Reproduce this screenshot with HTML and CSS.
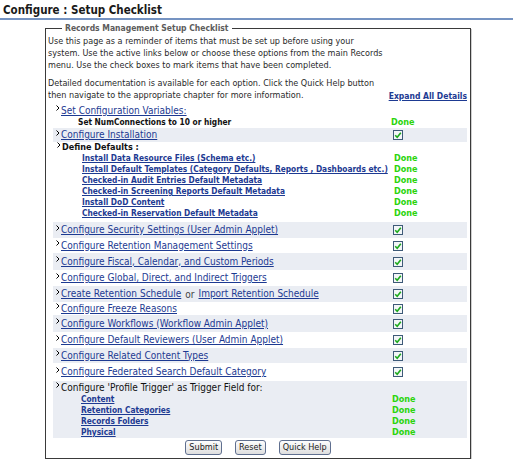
FILE: index.html
```html
<!DOCTYPE html>
<html>
<head>
<meta charset="utf-8">
<title>Configure : Setup Checklist</title>
<link rel="stylesheet" href="styles.css">
</head>
<body>
<h1 class="title">Configure : Setup Checklist</h1>
<div class="rule"></div>
<fieldset class="box">
  <legend class="legend">Records Management Setup Checklist</legend>
  <p class="intro">Use this page as a reminder of items that must be set up before using your<br>system. Use the active links below or choose these options from the main Records<br>menu. Use the check boxes to mark items that have been completed.</p>
  <div class="info">
    <p class="intro">Detailed documentation is available for each option. Click the Quick Help button<br>then navigate to the appropriate chapter for more information.</p>
    <a class="expand" href="#">Expand All Details</a>
  </div>

  <div class="list">
    <div class="row h13">
      <div class="label"><svg class="arrow" width="4" height="6" viewBox="0 0 4 6"><path d="M0.5 0.5 L3 3 L0.5 5.5" fill="none" stroke="#000" stroke-width="1"/></svg><a class="main" href="#">Set Configuration Variables:</a></div>
      <div class="status"></div>
    </div>
    <div class="row h11">
      <div class="label sub1"><b class="strong">Set NumConnections to 10 or higher</b></div>
      <div class="status"><span class="done">Done</span></div>
    </div>
    <div class="row h14 dot">
      <div class="label"><svg class="arrow" width="4" height="6" viewBox="0 0 4 6"><path d="M0.5 0.5 L3 3 L0.5 5.5" fill="none" stroke="#000" stroke-width="1"/></svg><a class="main" href="#">Configure Installation</a></div>
      <div class="status"><span class="cb"><svg width="8" height="8" viewBox="0 0 8 8"><path d="M1.2 4.2 L3.2 6.2 L6.8 1.8" fill="none" stroke="#1daa1d" stroke-width="1.6"/></svg></span></div>
    </div>
    <div class="row h11">
      <div class="label dd"><svg class="arrow" width="4" height="6" viewBox="0 0 4 6"><path d="M0.5 0.5 L3 3 L0.5 5.5" fill="none" stroke="#000" stroke-width="1"/></svg><b class="strong dft">Define Defaults :</b></div>
      <div class="status"></div>
    </div>
    <div class="row h11">
      <div class="label sub2"><a class="subl" href="#">Install Data Resource Files (Schema etc.)</a></div>
      <div class="status"><span class="done d2">Done</span></div>
    </div>
    <div class="row h11">
      <div class="label sub2"><a class="subl" href="#">Install Default Templates (Category Defaults, Reports , Dashboards etc.)</a></div>
      <div class="status"><span class="done d2">Done</span></div>
    </div>
    <div class="row h11">
      <div class="label sub2"><a class="subl" href="#">Checked-in Audit Entries Default Metadata</a></div>
      <div class="status"><span class="done d2">Done</span></div>
    </div>
    <div class="row h11">
      <div class="label sub2"><a class="subl" href="#">Checked-in Screening Reports Default Metadata</a></div>
      <div class="status"><span class="done d2">Done</span></div>
    </div>
    <div class="row h11">
      <div class="label sub2"><a class="subl" href="#">Install DoD Content</a></div>
      <div class="status"><span class="done d2">Done</span></div>
    </div>
    <div class="row h11">
      <div class="label sub2"><a class="subl" href="#">Checked-in Reservation Default Metadata</a></div>
      <div class="status"><span class="done d2">Done</span></div>
    </div>

    <div class="row h16 dot gap">
      <div class="label"><svg class="arrow" width="4" height="6" viewBox="0 0 4 6"><path d="M0.5 0.5 L3 3 L0.5 5.5" fill="none" stroke="#000" stroke-width="1"/></svg><a class="main" href="#">Configure Security Settings (User Admin Applet)</a></div>
      <div class="status"><span class="cb"><svg width="8" height="8" viewBox="0 0 8 8"><path d="M1.2 4.2 L3.2 6.2 L6.8 1.8" fill="none" stroke="#1daa1d" stroke-width="1.6"/></svg></span></div>
    </div>
    <div class="row h15">
      <div class="label"><svg class="arrow" width="4" height="6" viewBox="0 0 4 6"><path d="M0.5 0.5 L3 3 L0.5 5.5" fill="none" stroke="#000" stroke-width="1"/></svg><a class="main" href="#">Configure Retention Management Settings</a></div>
      <div class="status"><span class="cb"><svg width="8" height="8" viewBox="0 0 8 8"><path d="M1.2 4.2 L3.2 6.2 L6.8 1.8" fill="none" stroke="#1daa1d" stroke-width="1.6"/></svg></span></div>
    </div>
    <div class="row h17 dot">
      <div class="label"><svg class="arrow" width="4" height="6" viewBox="0 0 4 6"><path d="M0.5 0.5 L3 3 L0.5 5.5" fill="none" stroke="#000" stroke-width="1"/></svg><a class="main" href="#">Configure Fiscal, Calendar, and Custom Periods</a></div>
      <div class="status"><span class="cb"><svg width="8" height="8" viewBox="0 0 8 8"><path d="M1.2 4.2 L3.2 6.2 L6.8 1.8" fill="none" stroke="#1daa1d" stroke-width="1.6"/></svg></span></div>
    </div>
    <div class="row h16">
      <div class="label"><svg class="arrow" width="4" height="6" viewBox="0 0 4 6"><path d="M0.5 0.5 L3 3 L0.5 5.5" fill="none" stroke="#000" stroke-width="1"/></svg><a class="main" href="#">Configure Global, Direct, and Indirect Triggers</a></div>
      <div class="status"><span class="cb"><svg width="8" height="8" viewBox="0 0 8 8"><path d="M1.2 4.2 L3.2 6.2 L6.8 1.8" fill="none" stroke="#1daa1d" stroke-width="1.6"/></svg></span></div>
    </div>
    <div class="row h16 dot">
      <div class="label"><svg class="arrow" width="4" height="6" viewBox="0 0 4 6"><path d="M0.5 0.5 L3 3 L0.5 5.5" fill="none" stroke="#000" stroke-width="1"/></svg><a class="main" href="#">Create Retention Schedule</a><span class="or">or</span><a class="main" href="#">Import Retention Schedule</a></div>
      <div class="status"><span class="cb"><svg width="8" height="8" viewBox="0 0 8 8"><path d="M1.2 4.2 L3.2 6.2 L6.8 1.8" fill="none" stroke="#1daa1d" stroke-width="1.6"/></svg></span></div>
    </div>
    <div class="row h13">
      <div class="label"><svg class="arrow" width="4" height="6" viewBox="0 0 4 6"><path d="M0.5 0.5 L3 3 L0.5 5.5" fill="none" stroke="#000" stroke-width="1"/></svg><a class="main" href="#">Configure Freeze Reasons</a></div>
      <div class="status"><span class="cb"><svg width="8" height="8" viewBox="0 0 8 8"><path d="M1.2 4.2 L3.2 6.2 L6.8 1.8" fill="none" stroke="#1daa1d" stroke-width="1.6"/></svg></span></div>
    </div>
    <div class="row h17 dot">
      <div class="label"><svg class="arrow" width="4" height="6" viewBox="0 0 4 6"><path d="M0.5 0.5 L3 3 L0.5 5.5" fill="none" stroke="#000" stroke-width="1"/></svg><a class="main" href="#">Configure Workflows (Workflow Admin Applet)</a></div>
      <div class="status"><span class="cb"><svg width="8" height="8" viewBox="0 0 8 8"><path d="M1.2 4.2 L3.2 6.2 L6.8 1.8" fill="none" stroke="#1daa1d" stroke-width="1.6"/></svg></span></div>
    </div>
    <div class="row h16">
      <div class="label"><svg class="arrow" width="4" height="6" viewBox="0 0 4 6"><path d="M0.5 0.5 L3 3 L0.5 5.5" fill="none" stroke="#000" stroke-width="1"/></svg><a class="main" href="#">Configure Default Reviewers (User Admin Applet)</a></div>
      <div class="status"><span class="cb"><svg width="8" height="8" viewBox="0 0 8 8"><path d="M1.2 4.2 L3.2 6.2 L6.8 1.8" fill="none" stroke="#1daa1d" stroke-width="1.6"/></svg></span></div>
    </div>
    <div class="row h15 dot">
      <div class="label"><svg class="arrow" width="4" height="6" viewBox="0 0 4 6"><path d="M0.5 0.5 L3 3 L0.5 5.5" fill="none" stroke="#000" stroke-width="1"/></svg><a class="main" href="#">Configure Related Content Types</a></div>
      <div class="status"><span class="cb"><svg width="8" height="8" viewBox="0 0 8 8"><path d="M1.2 4.2 L3.2 6.2 L6.8 1.8" fill="none" stroke="#1daa1d" stroke-width="1.6"/></svg></span></div>
    </div>
    <div class="row h18">
      <div class="label"><svg class="arrow" width="4" height="6" viewBox="0 0 4 6"><path d="M0.5 0.5 L3 3 L0.5 5.5" fill="none" stroke="#000" stroke-width="1"/></svg><a class="main" href="#">Configure Federated Search Default Category</a></div>
      <div class="status"><span class="cb"><svg width="8" height="8" viewBox="0 0 8 8"><path d="M1.2 4.2 L3.2 6.2 L6.8 1.8" fill="none" stroke="#1daa1d" stroke-width="1.6"/></svg></span></div>
    </div>

    <div class="block dot">
      <div class="row h13">
        <div class="label"><svg class="arrow" width="4" height="6" viewBox="0 0 4 6"><path d="M0.5 0.5 L3 3 L0.5 5.5" fill="none" stroke="#000" stroke-width="1"/></svg><span class="plain">Configure 'Profile Trigger' as Trigger Field for:</span></div>
        <div class="status"></div>
      </div>
      <div class="row h11">
        <div class="label sub3"><a class="subl" href="#">Content</a></div>
        <div class="status"><span class="done d3">Done</span></div>
      </div>
      <div class="row h11">
        <div class="label sub3"><a class="subl" href="#">Retention Categories</a></div>
        <div class="status"><span class="done d3">Done</span></div>
      </div>
      <div class="row h11">
        <div class="label sub3"><a class="subl" href="#">Records Folders</a></div>
        <div class="status"><span class="done d3">Done</span></div>
      </div>
      <div class="row h11">
        <div class="label sub3"><a class="subl" href="#">Physical</a></div>
        <div class="status"><span class="done d3">Done</span></div>
      </div>
    </div>
  </div>

  <div class="buttons">
    <button class="btn" type="button">Submit</button>
    <button class="btn" type="button">Reset</button>
    <button class="btn" type="button">Quick Help</button>
  </div>
</fieldset>
</body>
</html>
```

FILE: styles.css
```css
body {
  margin: 0;
  background: #ffffff;
  color: #222222;
  font-family: "DejaVu Sans Condensed", "DejaVu Sans", sans-serif;
  font-size: 9px;
}

.title {
  margin: 3px 0 0 3px;
  font-size: 11.5px;
  line-height: 14px;
  font-weight: bold;
  color: #1a1a1a;
}

.rule {
  margin-top: 1px;
  border-top: 2px solid #7593c2;
}

.box {
  margin: 2px 42px 0 45px;
  padding: 1px 2px 3px 2px;
  border: 1px solid #3a3a3a;
  box-shadow: 1px 1px 0 #cfcfcf;
  min-width: 0;
}

.legend {
  margin-left: 14px;
  padding: 0 3px;
  font-size: 8.5px;
  line-height: 12px;
  font-weight: bold;
  color: #5c5c5c;
}

.intro {
  margin: 0;
  line-height: 12px;
  white-space: nowrap;
  color: #2a2a2a;
}

.info {
  margin-top: 6px;
  display: flex;
  justify-content: space-between;
  align-items: flex-end;
}

.expand {
  margin-right: 1px;
  margin-bottom: -1px;
  font-size: 8.5px;
  line-height: 12px;
  font-weight: bold;
  color: #1d3a92;
  text-decoration: underline;
}

.list {
  margin: 3px 1px 0 5px;
}

.row {
  display: grid;
  grid-template-columns: 338px 1fr;
  align-items: center;
}

.h11 { height: 11px; }
.h13 { height: 13px; }
.h14 { height: 14px; }
.h15 { height: 15px; }
.h16 { height: 16px; }
.h17 { height: 17px; }
.h18 { height: 18px; }

.gap { margin-top: 3px; }

.dot {
  background-color: #eaedf3;
}

.label {
  display: flex;
  align-items: center;
  white-space: nowrap;
  padding-left: 3px;
}

.arrow {
  flex: none;
  margin-right: 1px;
  margin-top: -5px;
}

.main {
  font-size: 10px;
  line-height: 12px;
  color: #1d3a92;
  text-decoration: underline;
}

.or {
  margin: 0 4px;
  font-size: 10px;
  color: #444444;
}

.plain {
  font-size: 10px;
  line-height: 12px;
  color: #111111;
}

.strong {
  font-size: 8.3px;
  font-weight: bold;
  color: #111111;
  line-height: 11px;
}

.dft {
  font-size: 9px;
}

.sub1 { padding-left: 25px; }
.dd { padding-left: 4px; }
.sub2 { padding-left: 29px; }
.sub3 { padding-left: 28px; }

.subl {
  font-size: 8.3px;
  line-height: 11px;
  font-weight: bold;
  color: #1d3a92;
  text-decoration: underline;
}

.status {
  display: flex;
  align-items: center;
}

.done {
  font-size: 9px;
  line-height: 11px;
  font-weight: bold;
  color: #2bd40c;
}

.d2 { margin-left: 3px; }
.d3 { margin-left: 1px; }

.cb {
  margin-left: 2px;
  width: 8px;
  height: 8px;
  border: 1px solid #3e5a78;
  background: #f3f6f8;
  display: flex;
  align-items: center;
  justify-content: center;
}

.buttons {
  margin-top: 2px;
  display: flex;
  justify-content: center;
  gap: 13px;
}

.btn {
  margin: 0;
  height: 15px;
  padding: 0 3px;
  font-family: "DejaVu Sans Condensed", "DejaVu Sans", sans-serif;
  font-size: 9px;
  line-height: 13px;
  color: #222222;
  border: 1px solid #5f6f8f;
  border-radius: 3px;
  background: linear-gradient(#fdfdfd, #dedede);
}
```
